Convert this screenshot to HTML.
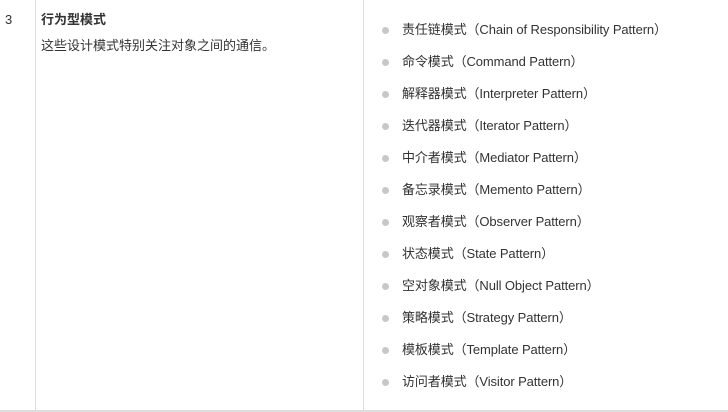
<!DOCTYPE html>
<html><head><meta charset="utf-8"><style>
body{margin:0;width:728px;height:412px;background:#fff;font-family:"Liberation Sans","Noto Sans CJK SC",sans-serif;font-size:13px;color:#333;position:relative;overflow:hidden}
.v{position:absolute;top:0;width:1px;height:411px;background:#ddd}
.b{position:absolute;left:0;top:410px;width:728px;height:2px;background:#ddd}
.t{position:absolute;white-space:nowrap;line-height:16px}
.dot{position:absolute;width:7px;height:7px;border-radius:50%;background:#c8c8c8}
</style></head><body>
<div class="v" style="left:35px"></div>
<div class="v" style="left:363px"></div>
<div class="b"></div>
<div class="t" style="left:5px;top:12px">3</div>
<div class="t" style="left:41px;top:12px;font-weight:bold">行为型模式</div>
<div class="t" style="left:41px;top:38px">这些设计模式特别关注对象之间的通信。</div>
<div id="l"></div>
<script>
var items=["责任链模式（Chain of Responsibility Pattern）","命令模式（Command Pattern）","解释器模式（Interpreter Pattern）","迭代器模式（Iterator Pattern）","中介者模式（Mediator Pattern）","备忘录模式（Memento Pattern）","观察者模式（Observer Pattern）","状态模式（State Pattern）","空对象模式（Null Object Pattern）","策略模式（Strategy Pattern）","模板模式（Template Pattern）","访问者模式（Visitor Pattern）"];
var h="";items.forEach(function(s,i){var y=29+32*i;h+='<div class="dot" style="left:382px;top:'+(y-2)+'px"></div><div class="t" style="left:402px;top:'+(y-7)+'px;letter-spacing:-0.1px">'+s+'</div>';});
document.getElementById("l").innerHTML=h;
</script>
</body></html>
